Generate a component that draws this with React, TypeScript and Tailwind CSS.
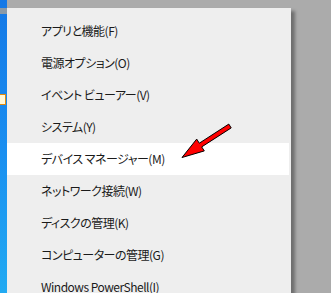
import React from 'react';

const items = [
  'アプリと機能(F)',
  '電源オプション(O)',
  'イベント ビューアー(V)',
  'システム(Y)',
  'デバイス マネージャー(M)',
  'ネットワーク接続(W)',
  'ディスクの管理(K)',
  'コンピューターの管理(G)',
  'Windows PowerShell(I)',
];

const App: React.FC = () => {
  return (
    <div className="relative flex w-[331px] h-[293px] overflow-hidden bg-[#ababab] font-['Noto_Sans_CJK_JP','Noto_Sans',sans-serif]">
      {/* デスクトップの端 */}
      <div className="relative w-[7px] h-full bg-gradient-to-b from-[#1478e6] via-[#1a8ef0] to-[#22aaf2]">
        <div className="absolute top-[8px] left-0 w-[7px] h-[6px] bg-[#8a9aa8]" />
        <div className="absolute top-[94px] left-0 w-[6px] h-[11px] bg-[#fff8d8] border border-l-0 border-[#e08a10]" />
      </div>

      {/* コンテキストメニュー */}
      <div className="mt-[8px] w-[284px] h-full bg-[#eeeeee] shadow-[4px_3px_3px_rgba(0,0,0,0.35)] pt-[7px]">
        {items.map((label, i) => (
          <div
            key={label}
            className={
              i === 4
                ? 'h-[32px] mr-[2px] flex items-center pl-[34px] bg-white text-[12px] tracking-[-0.5px] text-[#1a1a1a] [font-feature-settings:"palt"]'
                : 'h-[32px] mr-[2px] flex items-center pl-[34px] text-[12px] tracking-[-0.5px] text-[#1a1a1a] [font-feature-settings:"palt"]'
            }
          >
            {label}
          </div>
        ))}
      </div>

      {/* 赤い矢印 */}
      <svg className="absolute inset-0 pointer-events-none" width="331" height="293" viewBox="0 0 331 293">
        <polygon
          points="182,157.5 196.7,139.1 199.3,143.2 228.8,124.1 231.2,127.9 201.7,146.9 204.3,150.9"
          fill="#ff0000"
          stroke="#000"
          strokeWidth="1"
          strokeLinejoin="miter"
        />
      </svg>
    </div>
  );
};

export default App;
